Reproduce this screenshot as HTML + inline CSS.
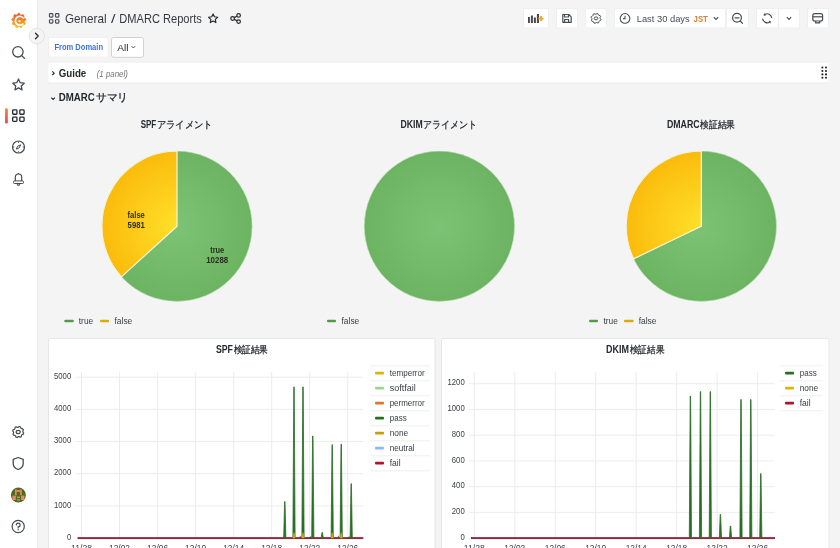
<!DOCTYPE html><html><head><meta charset="utf-8"><style>*{margin:0;padding:0}html,body{width:840px;height:548px;overflow:hidden;background:#f4f4f4}svg{display:block;will-change:transform;font-family:"Liberation Sans",sans-serif}</style></head><body>
<svg width="840" height="548" viewBox="0 0 840 548">
<defs>
<radialGradient id="gG" cx="0.5" cy="0.5" r="0.5"><stop offset="0" stop-color="#7dc375"/><stop offset="1" stop-color="#6cb462"/></radialGradient>
</defs>
<rect width="840" height="548" fill="#f4f4f4"/>
<rect x="0" y="0" width="37" height="548" fill="#ffffff"/>
<rect x="37" y="0" width="1" height="548" fill="#e9e9e9"/>
<defs><linearGradient id="lg" gradientUnits="userSpaceOnUse" x1="0" y1="28" x2="0" y2="13"><stop offset="0" stop-color="#f9c21f"/><stop offset="0.5" stop-color="#f48a25"/><stop offset="1" stop-color="#e94a2b"/></linearGradient></defs>
<polygon points="18.80,13.05 19.95,13.97 20.72,15.23 22.10,14.77 23.56,14.82 23.86,16.27 23.65,17.74 25.00,18.30 26.09,19.29 25.40,20.60 24.31,21.59 25.00,22.90 25.21,24.37 23.86,24.93 22.40,24.98 22.10,26.43 21.33,27.69 19.95,27.23 18.80,26.31 17.65,27.23 16.27,27.69 15.50,26.43 15.20,24.98 13.74,24.93 12.39,24.37 12.60,22.90 13.29,21.59 12.20,20.60 11.51,19.29 12.60,18.30 13.95,17.74 13.74,16.27 14.04,14.82 15.50,14.77 16.88,15.23 17.65,13.97" fill="url(#lg)" stroke="url(#lg)" stroke-width="0.6" stroke-linejoin="round"/>
<path d="M23.6,18.6 A4.4,4.4 0 1 0 23.3,23.4" fill="none" stroke="#fff" stroke-width="1.7"/>
<circle cx="19.5" cy="21.2" r="1.1" fill="#fff"/>
<g fill="none" stroke="#464c54" stroke-width="1.3"><circle cx="17.9" cy="51.8" r="5.2"/><path d="M21.7,55.6 L24.4,58.3" stroke-linecap="round"/></g>
<polygon points="18.50,79.00 16.80,82.65 12.79,83.15 15.74,85.90 14.97,89.85 18.50,87.90 22.03,89.85 21.26,85.90 24.21,83.15 20.20,82.65" fill="none" stroke="#464c54" stroke-width="1.3" stroke-linejoin="round"/>
<defs><linearGradient id="ab" x1="0" y1="0" x2="0" y2="1"><stop offset="0" stop-color="#f6823a"/><stop offset="1" stop-color="#d9474f"/></linearGradient></defs><rect x="5.1" y="108.2" width="2.7" height="15.3" rx="1.2" fill="url(#ab)"/>
<rect x="12.65" y="109.95" width="4.3" height="4.3" rx="0.8" fill="none" stroke="#24292e" stroke-width="1.3"/>
<rect x="12.65" y="117.10000000000001" width="4.3" height="4.3" rx="0.8" fill="none" stroke="#24292e" stroke-width="1.3"/>
<rect x="19.8" y="109.95" width="4.3" height="4.3" rx="0.8" fill="none" stroke="#24292e" stroke-width="1.3"/>
<rect x="19.8" y="117.10000000000001" width="4.3" height="4.3" rx="0.8" fill="none" stroke="#24292e" stroke-width="1.3"/>
<g fill="none" stroke="#464c54" stroke-width="1.2"><circle cx="18.5" cy="147" r="6"/><path d="M20.7,144.8 L19.3,147.8 L16.3,149.2 L17.7,146.2 Z" stroke-width="1"/><path d="M18.5,141.6 v1.2 M18.5,151.2 v1.2 M13.1,147 h1.2 M22.7,147 h1.2" stroke-width="1"/></g>
<g fill="none" stroke="#464c54" stroke-width="1.2" stroke-linejoin="round"><path d="M15.3,181 L15.3,177.4 A3.2,3.4 0 0 1 21.7,177.4 L21.7,181"/><rect x="13.5" y="180.9" width="10" height="2.6" rx="1" stroke-width="1"/><path d="M17.2,184.2 A1.4,1.4 0 0 0 19.8,184.2"/><path d="M18.5,173 L18.5,174"/></g>
<polygon points="23.69,433.11 23.37,434.16 22.10,434.63 21.51,435.34 21.29,436.67 20.32,437.18 19.10,436.62 18.18,436.70 17.09,437.49 16.04,437.17 15.57,435.90 14.86,435.31 13.53,435.09 13.02,434.12 13.58,432.90 13.50,431.98 12.71,430.89 13.03,429.84 14.30,429.37 14.89,428.66 15.11,427.33 16.08,426.82 17.30,427.38 18.22,427.30 19.31,426.51 20.36,426.83 20.83,428.10 21.54,428.69 22.87,428.91 23.38,429.88 22.82,431.10 22.90,432.02" fill="none" stroke="#464c54" stroke-width="1.2" stroke-linejoin="round"/>
<ellipse cx="18.2" cy="432" rx="2.016" ry="1.68" fill="none" stroke="#464c54" stroke-width="1.2"/>
<path d="M18.2,457.5 L23.2,459.3 L23.2,463.5 C23.2,466.6 20.8,468.6 18.2,469.5 C15.6,468.6 13.2,466.6 13.2,463.5 L13.2,459.3 Z" fill="none" stroke="#464c54" stroke-width="1.3" stroke-linejoin="round"/>
<circle cx="18.4" cy="495" r="7.5" fill="#4f6a1c"/>
<g fill="#e48a6c"><rect x="15" y="489.4" width="1.7" height="5.8"/><rect x="20.1" y="489.4" width="1.7" height="5.8"/><rect x="16.5" y="490" width="3.8" height="1.8"/><rect x="12.4" y="495.6" width="3.4" height="4.4"/><rect x="21" y="495.6" width="3.4" height="4.4"/></g>
<g fill="#c9a26c"><rect x="16.9" y="496.6" width="3" height="1.3"/><rect x="16.9" y="499.3" width="3" height="1.3"/></g>
<g fill="none" stroke="#464c54" stroke-width="1.2"><circle cx="18.2" cy="526.5" r="6.1"/><path d="M16.3,525 A1.9,1.9 0 1 1 18.2,526.9 L18.2,528" stroke-linecap="round"/></g><circle cx="18.2" cy="529.8" r="0.7" fill="#464c54"/>
<circle cx="36.8" cy="36" r="7.7" fill="#f4f4f4" stroke="#e4e5e6" stroke-width="1"/>
<path d="M35.5,33.3 L38.2,36 L35.5,38.7" fill="none" stroke="#24292e" stroke-width="1.3" stroke-linecap="round" stroke-linejoin="round"/>
<rect x="49.45" y="13.65" width="3.4" height="3.4" rx="0.8" fill="none" stroke="#464c54" stroke-width="1.15"/>
<rect x="49.45" y="19.7" width="3.4" height="3.4" rx="0.8" fill="none" stroke="#464c54" stroke-width="1.15"/>
<rect x="55.5" y="13.65" width="3.4" height="3.4" rx="0.8" fill="none" stroke="#464c54" stroke-width="1.15"/>
<rect x="55.5" y="19.7" width="3.4" height="3.4" rx="0.8" fill="none" stroke="#464c54" stroke-width="1.15"/>
<text x="65" y="23" font-size="13" fill="#34393f" font-weight="normal" font-style="normal" text-anchor="start" textLength="41.5" lengthAdjust="spacingAndGlyphs">General</text>
<text x="111" y="23" font-size="13" fill="#34393f" font-weight="normal" font-style="normal" text-anchor="start" textLength="4.5" lengthAdjust="spacingAndGlyphs">/</text>
<text x="119.3" y="23" font-size="13" fill="#34393f" font-weight="normal" font-style="normal" text-anchor="start" textLength="82.5" lengthAdjust="spacingAndGlyphs">DMARC Reports</text>
<polygon points="213.10,13.90 211.72,16.80 208.53,17.22 210.87,19.43 210.28,22.58 213.10,21.05 215.92,22.58 215.33,19.43 217.67,17.22 214.48,16.80" fill="none" stroke="#24292e" stroke-width="1.15" stroke-linejoin="round"/>
<g fill="none" stroke="#24292e" stroke-width="1.2"><circle cx="238.6" cy="15.4" r="1.8"/><circle cx="232.6" cy="18.5" r="1.8"/><circle cx="238.6" cy="21.6" r="1.8"/><path d="M234.2,17.6 L237,16.2 M234.2,19.4 L237,20.8"/></g>
<rect x="523.5" y="8.5" width="25" height="19.5" rx="1.5" fill="#ffffff" stroke="#efefef" stroke-width="1"/>
<rect x="556.5" y="8.5" width="21" height="19.5" rx="1.5" fill="#ffffff" stroke="#efefef" stroke-width="1"/>
<rect x="585.5" y="8.5" width="21" height="19.5" rx="1.5" fill="#ffffff" stroke="#efefef" stroke-width="1"/>
<rect x="614.5" y="8.5" width="111" height="19.5" rx="1.5" fill="#ffffff" stroke="#efefef" stroke-width="1"/>
<rect x="726.5" y="8.5" width="22" height="19.5" rx="1.5" fill="#ffffff" stroke="#efefef" stroke-width="1"/>
<rect x="756.5" y="8.5" width="43" height="19.5" rx="1.5" fill="#ffffff" stroke="#efefef" stroke-width="1"/>
<rect x="807.5" y="8.5" width="21" height="19.5" rx="1.5" fill="#ffffff" stroke="#efefef" stroke-width="1"/>
<rect x="778" y="9" width="1" height="19" fill="#ececed"/>
<g fill="#464c54"><rect x="528" y="17" width="1.9" height="6"/><rect x="530.9" y="15.5" width="2" height="7.5"/><rect x="533.9" y="17.5" width="2" height="5.5"/><rect x="536.9" y="14" width="2.1" height="9"/></g>
<path d="M541,16 v5.2 M538.4,18.6 h5.2" stroke="#f5a623" stroke-width="1.8"/>
<g fill="none" stroke="#464c54" stroke-width="1.2" stroke-linejoin="round"><path d="M562.8,14.5 h6 l2.4,2.4 v5.4 h-8.4 Z"/><path d="M564.5,14.5 v2.5 h4 v-2.5 M564.6,22.3 v-2.8 h4 v2.8"/></g>
<polygon points="600.90,19.39 600.61,20.33 599.48,20.75 598.96,21.38 598.76,22.57 597.90,23.03 596.80,22.52 595.98,22.60 595.01,23.30 594.07,23.01 593.65,21.88 593.02,21.36 591.83,21.16 591.37,20.30 591.88,19.20 591.80,18.38 591.10,17.41 591.39,16.47 592.52,16.05 593.04,15.42 593.24,14.23 594.10,13.77 595.20,14.28 596.02,14.20 596.99,13.50 597.93,13.79 598.35,14.92 598.98,15.44 600.17,15.64 600.63,16.50 600.12,17.60 600.20,18.42" fill="none" stroke="#464c54" stroke-width="1.0" stroke-linejoin="round"/>
<ellipse cx="596" cy="18.4" rx="1.7999999999999998" ry="1.5" fill="none" stroke="#464c54" stroke-width="1.0"/>
<g fill="none" stroke="#464c54" stroke-width="1.05"><circle cx="625" cy="18.4" r="4.8"/><path d="M625,15.8 v2.8 h-2"/></g>
<text x="636.7" y="21.7" font-size="9.5" fill="#464c54" font-weight="normal" font-style="normal" text-anchor="start" textLength="53" lengthAdjust="spacingAndGlyphs">Last 30 days</text>
<text x="693.6" y="21.7" font-size="9" fill="#e57d2e" font-weight="bold" font-style="normal" text-anchor="start" textLength="14.2" lengthAdjust="spacingAndGlyphs">JST</text>
<path d="M713.8,17.2 L716,19.4 L718.2,17.2" fill="none" stroke="#464c54" stroke-width="1.1"/>
<g fill="none" stroke="#464c54" stroke-width="1.2"><circle cx="737" cy="17.8" r="4.4"/><path d="M740.2,21 L742.5,23.3 M735,17.8 h4" stroke-linecap="round"/></g>
<g fill="none" stroke="#464c54" stroke-width="1.2" stroke-linecap="round"><path d="M764.95,14.40 A4.5,4.5 0 0 1 771.63,17.52"/><path d="M762.77,19.08 A4.5,4.5 0 0 0 769.45,22.20"/></g>
<g fill="#464c54"><path d="M763.65,15.53 L764.05,12.84 L765.85,15.96 Z"/><path d="M770.75,21.07 L770.35,23.76 L768.55,20.64 Z"/></g>
<path d="M786.8,17.2 L789,19.4 L791.2,17.2" fill="none" stroke="#464c54" stroke-width="1.1"/>
<g fill="none" stroke="#464c54" stroke-width="1.2" stroke-linejoin="round"><rect x="812.8" y="13.6" width="9.8" height="7.4" rx="2"/><path d="M812.8,16.8 h9.8"/><path d="M815.6,21 v1.8 h4.2 v-1.8"/></g>
<rect x="48.5" y="37.5" width="59.5" height="19.6" fill="#ffffff" stroke="#f0f0f0" stroke-width="1"/>
<text x="54.4" y="50.4" font-size="8.6" fill="#3d71d9" font-weight="bold" font-style="normal" text-anchor="start" textLength="48.6" lengthAdjust="spacingAndGlyphs">From Domain</text>
<rect x="111.5" y="37.5" width="32" height="19.8" rx="2" fill="#ffffff" stroke="#d0d1d3" stroke-width="1"/>
<text x="117.2" y="50.8" font-size="9.8" fill="#24292e" font-weight="normal" font-style="normal" text-anchor="start" textLength="11.2" lengthAdjust="spacingAndGlyphs">All</text>
<path d="M131.6,46.2 L133.4,48 L135.2,46.2" fill="none" stroke="#464c54" stroke-width="1"/>
<rect x="48" y="61.6" width="781" height="22" fill="#efefef"/><rect x="48.4" y="62.6" width="780.2" height="19.8" fill="#ffffff"/>
<path d="M52.2,71.4 L54.2,73.2 L52.2,75" fill="none" stroke="#24292e" stroke-width="1.1"/>
<text x="58.7" y="76.7" font-size="10.8" fill="#24292e" font-weight="bold" font-style="normal" text-anchor="start" textLength="27.6" lengthAdjust="spacingAndGlyphs">Guide</text>
<text x="96.7" y="76.5" font-size="8.6" fill="#6e7276" font-weight="normal" font-style="italic" text-anchor="start" textLength="31.2" lengthAdjust="spacingAndGlyphs">(1 panel)</text>
<circle cx="822.4" cy="67.5" r="1.05" fill="#24292e"/><circle cx="826" cy="67.5" r="1.05" fill="#24292e"/>
<circle cx="822.4" cy="71" r="1.05" fill="#24292e"/><circle cx="826" cy="71" r="1.05" fill="#24292e"/>
<circle cx="822.4" cy="74.4" r="1.05" fill="#24292e"/><circle cx="826" cy="74.4" r="1.05" fill="#24292e"/>
<circle cx="822.4" cy="77.8" r="1.05" fill="#24292e"/><circle cx="826" cy="77.8" r="1.05" fill="#24292e"/>
<path d="M51.3,97.6 L53.1,99.4 L54.9,97.6" fill="none" stroke="#24292e" stroke-width="1.1"/>
<text x="58.7" y="100.8" font-size="10.6" fill="#24292e" font-weight="bold" font-style="normal" text-anchor="start" textLength="36" lengthAdjust="spacingAndGlyphs">DMARC</text>
<text x="95.8" y="100.9" font-size="11" fill="#24292e" font-weight="normal" font-style="normal" text-anchor="start" textLength="32.2" lengthAdjust="spacingAndGlyphs" stroke="#24292e" stroke-width="0.3">サマリ</text>
<circle cx="177" cy="226.2" r="75.2" fill="#6fb866"/>
<circle cx="177" cy="226.2" r="75.2" fill="url(#gG)"/>
<radialGradient id="gy177" gradientUnits="userSpaceOnUse" cx="177" cy="226.2" r="75.2"><stop offset="0" stop-color="#ffe02a"/><stop offset="1" stop-color="#fbbb0c"/></radialGradient>
<path d="M177,226.2 L121.42,276.86 A75.2,75.2 0 0 1 177,151.0 Z" fill="url(#gy177)" stroke="#fdf6d8" stroke-width="1.2" stroke-linejoin="round"/>
<circle cx="177" cy="226.2" r="75.2" fill="none" stroke="#e8f4e6" stroke-width="0.6"/>
<text x="136.2" y="217.6" font-size="9" fill="#2b2f1e" font-weight="bold" font-style="normal" text-anchor="middle" textLength="17.2" lengthAdjust="spacingAndGlyphs">false</text>
<text x="136.2" y="227.6" font-size="9" fill="#2b2f1e" font-weight="bold" font-style="normal" text-anchor="middle" textLength="17.2" lengthAdjust="spacingAndGlyphs">5981</text>
<text x="217.2" y="253.2" font-size="9" fill="#2b2f1e" font-weight="bold" font-style="normal" text-anchor="middle" textLength="14" lengthAdjust="spacingAndGlyphs">true</text>
<text x="217.2" y="263.2" font-size="9" fill="#2b2f1e" font-weight="bold" font-style="normal" text-anchor="middle" textLength="22" lengthAdjust="spacingAndGlyphs">10288</text>
<circle cx="439.4" cy="226.2" r="75.2" fill="#6fb866"/>
<circle cx="439.4" cy="226.2" r="75.2" fill="url(#gG)"/>
<circle cx="439.4" cy="226.2" r="75.2" fill="none" stroke="#e8f4e6" stroke-width="0.6"/>
<circle cx="701.3" cy="226.2" r="75.2" fill="#6fb866"/>
<circle cx="701.3" cy="226.2" r="75.2" fill="url(#gG)"/>
<radialGradient id="gy701" gradientUnits="userSpaceOnUse" cx="701.3" cy="226.2" r="75.2"><stop offset="0" stop-color="#ffe02a"/><stop offset="1" stop-color="#fbbb0c"/></radialGradient>
<path d="M701.3,226.2 L633.56,258.86 A75.2,75.2 0 0 1 701.3,151.0 Z" fill="url(#gy701)" stroke="#fdf6d8" stroke-width="1.2" stroke-linejoin="round"/>
<circle cx="701.3" cy="226.2" r="75.2" fill="none" stroke="#e8f4e6" stroke-width="0.6"/>
<text x="140.7" y="127.6" font-size="10" fill="#24292e" font-weight="bold" font-style="normal" text-anchor="start" textLength="15.500000000000005" lengthAdjust="spacingAndGlyphs">SPF</text>
<text x="156.79999999999998" y="127.6" font-size="10" fill="#24292e" font-weight="normal" font-style="normal" text-anchor="start" textLength="55.9" lengthAdjust="spacingAndGlyphs" stroke="#24292e" stroke-width="0.25">アライメント</text>
<text x="400.5" y="127.6" font-size="10" fill="#24292e" font-weight="bold" font-style="normal" text-anchor="start" textLength="22.200000000000024" lengthAdjust="spacingAndGlyphs">DKIM</text>
<text x="423.3" y="127.6" font-size="10" fill="#24292e" font-weight="normal" font-style="normal" text-anchor="start" textLength="53.999999999999964" lengthAdjust="spacingAndGlyphs" stroke="#24292e" stroke-width="0.25">アライメント</text>
<text x="666.9" y="127.6" font-size="10" fill="#24292e" font-weight="bold" font-style="normal" text-anchor="start" textLength="32.700000000000024" lengthAdjust="spacingAndGlyphs">DMARC</text>
<text x="700.2" y="127.6" font-size="10" fill="#24292e" font-weight="normal" font-style="normal" text-anchor="start" textLength="34.9" lengthAdjust="spacingAndGlyphs" stroke="#24292e" stroke-width="0.25">検証結果</text>
<rect x="64.3" y="319.75" width="9.5" height="2.5" rx="1" fill="#4e9c45"/>
<text x="78.8" y="323.7" font-size="9.5" fill="#3b4046" font-weight="normal" font-style="normal" text-anchor="start" textLength="14.4" lengthAdjust="spacingAndGlyphs">true</text>
<rect x="100" y="319.75" width="9.099999999999994" height="2.5" rx="1" fill="#dcaa08"/>
<text x="114.5" y="323.7" font-size="9.5" fill="#3b4046" font-weight="normal" font-style="normal" text-anchor="start" textLength="17.8" lengthAdjust="spacingAndGlyphs">false</text>
<rect x="327" y="319.75" width="9" height="2.5" rx="1" fill="#4e9c45"/>
<text x="341.5" y="323.7" font-size="9.5" fill="#3b4046" font-weight="normal" font-style="normal" text-anchor="start" textLength="17.8" lengthAdjust="spacingAndGlyphs">false</text>
<rect x="589.1" y="319.75" width="8.899999999999977" height="2.5" rx="1" fill="#4e9c45"/>
<text x="603.4" y="323.7" font-size="9.5" fill="#3b4046" font-weight="normal" font-style="normal" text-anchor="start" textLength="14.4" lengthAdjust="spacingAndGlyphs">true</text>
<rect x="624" y="319.75" width="9.600000000000023" height="2.5" rx="1" fill="#dcaa08"/>
<text x="638.7" y="323.7" font-size="9.5" fill="#3b4046" font-weight="normal" font-style="normal" text-anchor="start" textLength="17.8" lengthAdjust="spacingAndGlyphs">false</text>
<rect x="48.5" y="338.5" width="386.5" height="220" rx="1.5" fill="#ffffff" stroke="#e6e6e6" stroke-width="1"/>
<rect x="441.5" y="338.5" width="387.5" height="220" rx="1.5" fill="#ffffff" stroke="#e6e6e6" stroke-width="1"/>
<text x="215.9" y="352.5" font-size="10" fill="#24292e" font-weight="bold" font-style="normal" text-anchor="start" textLength="17" lengthAdjust="spacingAndGlyphs">SPF</text>
<text x="233.5" y="352.5" font-size="10" fill="#24292e" font-weight="normal" font-style="normal" text-anchor="start" textLength="34.5" lengthAdjust="spacingAndGlyphs" stroke="#24292e" stroke-width="0.25">検証結果</text>
<text x="606" y="352.5" font-size="10" fill="#24292e" font-weight="bold" font-style="normal" text-anchor="start" textLength="23" lengthAdjust="spacingAndGlyphs">DKIM</text>
<text x="629.7" y="352.5" font-size="10" fill="#24292e" font-weight="normal" font-style="normal" text-anchor="start" textLength="34.5" lengthAdjust="spacingAndGlyphs" stroke="#24292e" stroke-width="0.25">検証結果</text>
<rect x="75.6" y="537.60" width="287.70000000000005" height="1" fill="#ececec"/>
<text x="71.2" y="539.8000000000001" font-size="9.2" fill="#3b4046" font-weight="normal" font-style="normal" text-anchor="end" textLength="4.3" lengthAdjust="spacingAndGlyphs">0</text>
<rect x="75.6" y="505.42" width="287.70000000000005" height="1" fill="#ececec"/>
<text x="71.2" y="507.62" font-size="9.2" fill="#3b4046" font-weight="normal" font-style="normal" text-anchor="end" textLength="17.2" lengthAdjust="spacingAndGlyphs">1000</text>
<rect x="75.6" y="473.24" width="287.70000000000005" height="1" fill="#ececec"/>
<text x="71.2" y="475.44" font-size="9.2" fill="#3b4046" font-weight="normal" font-style="normal" text-anchor="end" textLength="17.2" lengthAdjust="spacingAndGlyphs">2000</text>
<rect x="75.6" y="441.06" width="287.70000000000005" height="1" fill="#ececec"/>
<text x="71.2" y="443.26" font-size="9.2" fill="#3b4046" font-weight="normal" font-style="normal" text-anchor="end" textLength="17.2" lengthAdjust="spacingAndGlyphs">3000</text>
<rect x="75.6" y="408.88" width="287.70000000000005" height="1" fill="#ececec"/>
<text x="71.2" y="411.08" font-size="9.2" fill="#3b4046" font-weight="normal" font-style="normal" text-anchor="end" textLength="17.2" lengthAdjust="spacingAndGlyphs">4000</text>
<rect x="75.6" y="376.70" width="287.70000000000005" height="1" fill="#ececec"/>
<text x="71.2" y="378.90000000000003" font-size="9.2" fill="#3b4046" font-weight="normal" font-style="normal" text-anchor="end" textLength="17.2" lengthAdjust="spacingAndGlyphs">5000</text>
<rect x="81.00" y="372" width="1" height="166.10000000000002" fill="#ececec"/>
<text x="81.5" y="551.2" font-size="9.2" fill="#3b4046" font-weight="normal" font-style="normal" text-anchor="middle" textLength="21" lengthAdjust="spacingAndGlyphs">11/28</text>
<rect x="119.04" y="372" width="1" height="166.10000000000002" fill="#ececec"/>
<text x="119.53999999999999" y="551.2" font-size="9.2" fill="#3b4046" font-weight="normal" font-style="normal" text-anchor="middle" textLength="21" lengthAdjust="spacingAndGlyphs">12/02</text>
<rect x="157.08" y="372" width="1" height="166.10000000000002" fill="#ececec"/>
<text x="157.57999999999998" y="551.2" font-size="9.2" fill="#3b4046" font-weight="normal" font-style="normal" text-anchor="middle" textLength="21" lengthAdjust="spacingAndGlyphs">12/06</text>
<rect x="195.12" y="372" width="1" height="166.10000000000002" fill="#ececec"/>
<text x="195.62" y="551.2" font-size="9.2" fill="#3b4046" font-weight="normal" font-style="normal" text-anchor="middle" textLength="21" lengthAdjust="spacingAndGlyphs">12/10</text>
<rect x="233.16" y="372" width="1" height="166.10000000000002" fill="#ececec"/>
<text x="233.66" y="551.2" font-size="9.2" fill="#3b4046" font-weight="normal" font-style="normal" text-anchor="middle" textLength="21" lengthAdjust="spacingAndGlyphs">12/14</text>
<rect x="271.20" y="372" width="1" height="166.10000000000002" fill="#ececec"/>
<text x="271.7" y="551.2" font-size="9.2" fill="#3b4046" font-weight="normal" font-style="normal" text-anchor="middle" textLength="21" lengthAdjust="spacingAndGlyphs">12/18</text>
<rect x="309.24" y="372" width="1" height="166.10000000000002" fill="#ececec"/>
<text x="309.74" y="551.2" font-size="9.2" fill="#3b4046" font-weight="normal" font-style="normal" text-anchor="middle" textLength="21" lengthAdjust="spacingAndGlyphs">12/22</text>
<rect x="347.28" y="372" width="1" height="166.10000000000002" fill="#ececec"/>
<text x="347.78" y="551.2" font-size="9.2" fill="#3b4046" font-weight="normal" font-style="normal" text-anchor="middle" textLength="21" lengthAdjust="spacingAndGlyphs">12/26</text>
<rect x="77.6" y="537.1" width="285.70000000000005" height="2" fill="#8f2a3f"/>
<path d="M283.7,538.1 L284.6,501.6 L285.0,501.6 L285.90000000000003,538.1 Z" fill="#2a6e27" stroke="#2a6e27" stroke-width="0.8"/>
<path d="M292.9,538.1 L293.8,386.9 L294.2,386.9 L295.1,538.1 Z" fill="#2a6e27" stroke="#2a6e27" stroke-width="0.8"/>
<path d="M301.9,538.1 L302.8,386.9 L303.2,386.9 L304.1,538.1 Z" fill="#2a6e27" stroke="#2a6e27" stroke-width="0.8"/>
<path d="M311.7,538.1 L312.6,436 L313.0,436 L313.90000000000003,538.1 Z" fill="#2a6e27" stroke="#2a6e27" stroke-width="0.8"/>
<path d="M321.09999999999997,538.1 L322.0,532.4 L322.4,532.4 L323.3,538.1 Z" fill="#2a6e27" stroke="#2a6e27" stroke-width="0.8"/>
<path d="M331.09999999999997,538.1 L332.0,444.7 L332.4,444.7 L333.3,538.1 Z" fill="#2a6e27" stroke="#2a6e27" stroke-width="0.8"/>
<path d="M340.09999999999997,538.1 L341.0,444.2 L341.4,444.2 L342.3,538.1 Z" fill="#2a6e27" stroke="#2a6e27" stroke-width="0.8"/>
<path d="M350.09999999999997,538.1 L351.0,483.7 L351.4,483.7 L352.3,538.1 Z" fill="#2a6e27" stroke="#2a6e27" stroke-width="0.8"/>
<path d="M292.8,538.1 L293.7,532.8 L294.3,532.8 L295.2,538.1 Z" fill="#cfa324" stroke="#cfa324" stroke-width="0.4"/>
<path d="M301.8,538.1 L302.7,532.8 L303.3,532.8 L304.2,538.1 Z" fill="#cfa324" stroke="#cfa324" stroke-width="0.4"/>
<path d="M331.0,538.1 L331.9,532.8 L332.5,532.8 L333.4,538.1 Z" fill="#cfa324" stroke="#cfa324" stroke-width="0.4"/>
<path d="M340.0,538.1 L340.9,532.8 L341.5,532.8 L342.4,538.1 Z" fill="#cfa324" stroke="#cfa324" stroke-width="0.4"/>
<path d="M299.2,538.1 L300.2,535.6 L301.2,538.1 Z" fill="#5c4a22"/>
<path d="M309.5,538.1 L310.5,536 L311.5,538.1 Z" fill="#5c4a22"/>
<path d="M337.5,538.1 L338.5,535.6 L339.5,538.1 Z" fill="#5c4a22"/>
<path d="M348,538.1 L349,536 L350,538.1 Z" fill="#5c4a22"/>
<rect x="370" y="365.30" width="60" height="1" fill="#efefef"/>
<rect x="375" y="371.70" width="9" height="2.8" rx="1" fill="#e0b400"/>
<text x="389.7" y="376.3" font-size="9" fill="#3b4046" font-weight="normal" font-style="normal" text-anchor="start" textLength="35" lengthAdjust="spacingAndGlyphs">temperror</text>
<rect x="370" y="380.30" width="60" height="1" fill="#efefef"/>
<rect x="375" y="386.70" width="9" height="2.8" rx="1" fill="#96d98d"/>
<text x="389.7" y="391.3" font-size="9" fill="#3b4046" font-weight="normal" font-style="normal" text-anchor="start" textLength="26" lengthAdjust="spacingAndGlyphs">softfail</text>
<rect x="370" y="395.30" width="60" height="1" fill="#efefef"/>
<rect x="375" y="401.70" width="9" height="2.8" rx="1" fill="#e0752d"/>
<text x="389.7" y="406.3" font-size="9" fill="#3b4046" font-weight="normal" font-style="normal" text-anchor="start" textLength="35" lengthAdjust="spacingAndGlyphs">permerror</text>
<rect x="370" y="410.30" width="60" height="1" fill="#efefef"/>
<rect x="375" y="416.70" width="9" height="2.8" rx="1" fill="#25701f"/>
<text x="389.7" y="421.3" font-size="9" fill="#3b4046" font-weight="normal" font-style="normal" text-anchor="start" textLength="17" lengthAdjust="spacingAndGlyphs">pass</text>
<rect x="370" y="425.30" width="60" height="1" fill="#efefef"/>
<rect x="375" y="431.70" width="9" height="2.8" rx="1" fill="#c8a000"/>
<text x="389.7" y="436.3" font-size="9" fill="#3b4046" font-weight="normal" font-style="normal" text-anchor="start" textLength="18.5" lengthAdjust="spacingAndGlyphs">none</text>
<rect x="370" y="440.30" width="60" height="1" fill="#efefef"/>
<rect x="375" y="446.70" width="9" height="2.8" rx="1" fill="#8ab8ff"/>
<text x="389.7" y="451.3" font-size="9" fill="#3b4046" font-weight="normal" font-style="normal" text-anchor="start" textLength="25" lengthAdjust="spacingAndGlyphs">neutral</text>
<rect x="370" y="455.30" width="60" height="1" fill="#efefef"/>
<rect x="375" y="461.70" width="9" height="2.8" rx="1" fill="#b0132a"/>
<text x="389.7" y="466.3" font-size="9" fill="#3b4046" font-weight="normal" font-style="normal" text-anchor="start" textLength="11" lengthAdjust="spacingAndGlyphs">fail</text>
<rect x="370" y="470.30" width="60" height="1" fill="#efefef"/>
<rect x="469" y="537.60" width="306" height="1" fill="#ececec"/>
<text x="464.7" y="539.8000000000001" font-size="9.2" fill="#3b4046" font-weight="normal" font-style="normal" text-anchor="end" textLength="4.3" lengthAdjust="spacingAndGlyphs">0</text>
<rect x="469" y="511.87" width="306" height="1" fill="#ececec"/>
<text x="464.7" y="514.07" font-size="9.2" fill="#3b4046" font-weight="normal" font-style="normal" text-anchor="end" textLength="12.899999999999999" lengthAdjust="spacingAndGlyphs">200</text>
<rect x="469" y="486.14" width="306" height="1" fill="#ececec"/>
<text x="464.7" y="488.34" font-size="9.2" fill="#3b4046" font-weight="normal" font-style="normal" text-anchor="end" textLength="12.899999999999999" lengthAdjust="spacingAndGlyphs">400</text>
<rect x="469" y="460.41" width="306" height="1" fill="#ececec"/>
<text x="464.7" y="462.61" font-size="9.2" fill="#3b4046" font-weight="normal" font-style="normal" text-anchor="end" textLength="12.899999999999999" lengthAdjust="spacingAndGlyphs">600</text>
<rect x="469" y="434.68" width="306" height="1" fill="#ececec"/>
<text x="464.7" y="436.88" font-size="9.2" fill="#3b4046" font-weight="normal" font-style="normal" text-anchor="end" textLength="12.899999999999999" lengthAdjust="spacingAndGlyphs">800</text>
<rect x="469" y="408.95" width="306" height="1" fill="#ececec"/>
<text x="464.7" y="411.15000000000003" font-size="9.2" fill="#3b4046" font-weight="normal" font-style="normal" text-anchor="end" textLength="17.2" lengthAdjust="spacingAndGlyphs">1000</text>
<rect x="469" y="383.22" width="306" height="1" fill="#ececec"/>
<text x="464.7" y="385.42" font-size="9.2" fill="#3b4046" font-weight="normal" font-style="normal" text-anchor="end" textLength="17.2" lengthAdjust="spacingAndGlyphs">1200</text>
<rect x="473.80" y="372" width="1" height="166.10000000000002" fill="#ececec"/>
<text x="474.3" y="551.2" font-size="9.2" fill="#3b4046" font-weight="normal" font-style="normal" text-anchor="middle" textLength="21" lengthAdjust="spacingAndGlyphs">11/28</text>
<rect x="514.27" y="372" width="1" height="166.10000000000002" fill="#ececec"/>
<text x="514.77" y="551.2" font-size="9.2" fill="#3b4046" font-weight="normal" font-style="normal" text-anchor="middle" textLength="21" lengthAdjust="spacingAndGlyphs">12/02</text>
<rect x="554.74" y="372" width="1" height="166.10000000000002" fill="#ececec"/>
<text x="555.24" y="551.2" font-size="9.2" fill="#3b4046" font-weight="normal" font-style="normal" text-anchor="middle" textLength="21" lengthAdjust="spacingAndGlyphs">12/06</text>
<rect x="595.21" y="372" width="1" height="166.10000000000002" fill="#ececec"/>
<text x="595.71" y="551.2" font-size="9.2" fill="#3b4046" font-weight="normal" font-style="normal" text-anchor="middle" textLength="21" lengthAdjust="spacingAndGlyphs">12/10</text>
<rect x="635.68" y="372" width="1" height="166.10000000000002" fill="#ececec"/>
<text x="636.1800000000001" y="551.2" font-size="9.2" fill="#3b4046" font-weight="normal" font-style="normal" text-anchor="middle" textLength="21" lengthAdjust="spacingAndGlyphs">12/14</text>
<rect x="676.15" y="372" width="1" height="166.10000000000002" fill="#ececec"/>
<text x="676.65" y="551.2" font-size="9.2" fill="#3b4046" font-weight="normal" font-style="normal" text-anchor="middle" textLength="21" lengthAdjust="spacingAndGlyphs">12/18</text>
<rect x="716.62" y="372" width="1" height="166.10000000000002" fill="#ececec"/>
<text x="717.12" y="551.2" font-size="9.2" fill="#3b4046" font-weight="normal" font-style="normal" text-anchor="middle" textLength="21" lengthAdjust="spacingAndGlyphs">12/22</text>
<rect x="757.09" y="372" width="1" height="166.10000000000002" fill="#ececec"/>
<text x="757.5899999999999" y="551.2" font-size="9.2" fill="#3b4046" font-weight="normal" font-style="normal" text-anchor="middle" textLength="21" lengthAdjust="spacingAndGlyphs">12/26</text>
<rect x="471" y="537.1" width="304" height="2" fill="#8f2a3f"/>
<path d="M689.3,538.1 L690.1999999999999,396 L690.6,396 L691.5,538.1 Z" fill="#2a6e27" stroke="#2a6e27" stroke-width="0.8"/>
<path d="M699.4,538.1 L700.3,391.6 L700.7,391.6 L701.6,538.1 Z" fill="#2a6e27" stroke="#2a6e27" stroke-width="0.8"/>
<path d="M709.1999999999999,538.1 L710.0999999999999,391.6 L710.5,391.6 L711.4,538.1 Z" fill="#2a6e27" stroke="#2a6e27" stroke-width="0.8"/>
<path d="M719.3,538.1 L720.1999999999999,514.4 L720.6,514.4 L721.5,538.1 Z" fill="#2a6e27" stroke="#2a6e27" stroke-width="0.8"/>
<path d="M729.4,538.1 L730.3,526 L730.7,526 L731.6,538.1 Z" fill="#2a6e27" stroke="#2a6e27" stroke-width="0.8"/>
<path d="M739.9,538.1 L740.8,399.5 L741.2,399.5 L742.1,538.1 Z" fill="#2a6e27" stroke="#2a6e27" stroke-width="0.8"/>
<path d="M749.6999999999999,538.1 L750.5999999999999,399.5 L751.0,399.5 L751.9,538.1 Z" fill="#2a6e27" stroke="#2a6e27" stroke-width="0.8"/>
<path d="M759.6999999999999,538.1 L760.5999999999999,473.6 L761.0,473.6 L761.9,538.1 Z" fill="#2a6e27" stroke="#2a6e27" stroke-width="0.8"/>
<rect x="780" y="365.30" width="43" height="1" fill="#efefef"/>
<rect x="785" y="371.70" width="9" height="2.8" rx="1" fill="#25701f"/>
<text x="799.7" y="376.3" font-size="9" fill="#3b4046" font-weight="normal" font-style="normal" text-anchor="start" textLength="17" lengthAdjust="spacingAndGlyphs">pass</text>
<rect x="780" y="380.30" width="43" height="1" fill="#efefef"/>
<rect x="785" y="386.70" width="9" height="2.8" rx="1" fill="#e0b400"/>
<text x="799.7" y="391.3" font-size="9" fill="#3b4046" font-weight="normal" font-style="normal" text-anchor="start" textLength="18.5" lengthAdjust="spacingAndGlyphs">none</text>
<rect x="780" y="395.30" width="43" height="1" fill="#efefef"/>
<rect x="785" y="401.70" width="9" height="2.8" rx="1" fill="#b0132a"/>
<text x="799.7" y="406.3" font-size="9" fill="#3b4046" font-weight="normal" font-style="normal" text-anchor="start" textLength="11" lengthAdjust="spacingAndGlyphs">fail</text>
<rect x="780" y="410.30" width="43" height="1" fill="#efefef"/>
</svg></body></html>
